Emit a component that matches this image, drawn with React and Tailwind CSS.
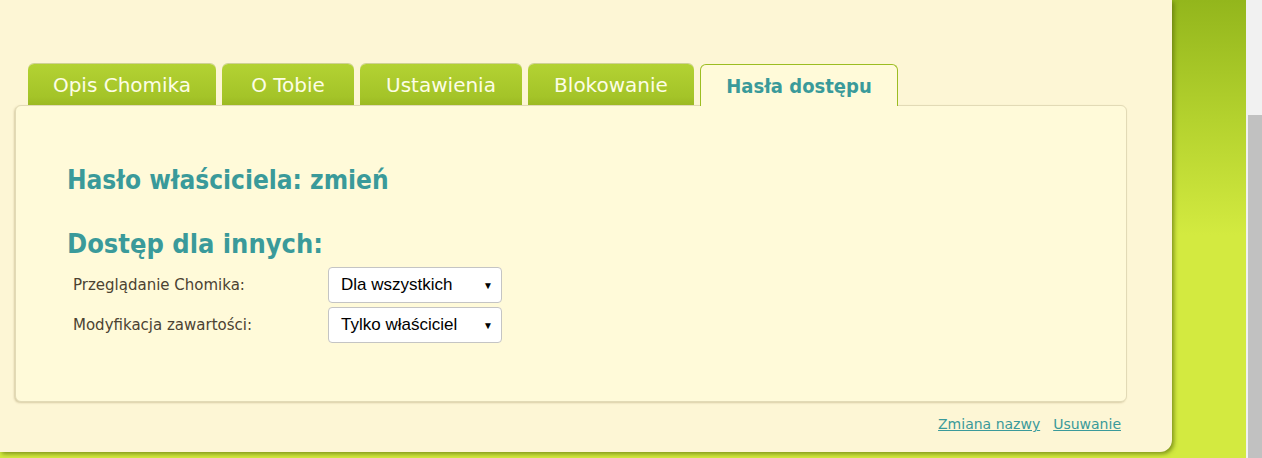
import { useState } from 'react';

const TABS = ['Opis Chomika', 'O Tobie', 'Ustawienia', 'Blokowanie', 'Hasła dostępu'];
const TAB_W = ['w-[188px]', 'w-[132px]', 'w-[162px]', 'w-[166px]', 'w-[198px]'];

function Select({ value }) {
  return (
    <div className="w-[174px] h-[36px] bg-white border border-[#c4c4c4] rounded-[4px] flex items-center justify-between pl-[12px] pr-[8px] font-['Liberation_Sans',Arial,sans-serif] text-[17px] text-black">
      <span>{value}</span>
      <span className="text-[10px]">▼</span>
    </div>
  );
}

export default function App() {
  const [active] = useState(4);
  return (
    <div className="flex h-[458px] w-[1262px] overflow-hidden font-['DejaVu_Sans',sans-serif]">
      {/* page + green side */}
      <div className="w-[1246px] h-full bg-[linear-gradient(to_bottom,#93b61c_0px,#b4d22e_120px,#d3ea40_235px,#d3ea40_100%)]">
        <div className="w-[1172px] h-[452px] bg-[#fdf6d5] rounded-br-[12px] shadow-[2px_2px_4px_rgba(90,110,10,0.7)] pl-[15px] pr-[45px] pt-[63px]">
          {/* tabs */}
          <div className="flex items-end pl-[13px] gap-[6px] h-[42px] relative z-10">
            {TABS.map((t, i) =>
              i === active ? (
                <div
                  key={t}
                  className={`${TAB_W[i]} h-[42px] -mb-px bg-[#fffad9] border border-b-0 border-[#9cbd22] rounded-t-[6px] flex items-center justify-center font-['DejaVu_Sans_Condensed','DejaVu_Sans',sans-serif] text-[20px] font-bold text-[#3a9a9a]`}
                >
                  {t}
                </div>
              ) : (
                <div
                  key={t}
                  className={`${TAB_W[i]} h-[41px] bg-[linear-gradient(to_bottom,#b3d233,#a4c428_80%,#9cb923)] rounded-t-[6px] flex items-center justify-center text-[20px] text-[#fdfde6] shadow-[0_-1px_0_rgba(120,140,30,0.35)]`}
                >
                  {t}
                </div>
              )
            )}
          </div>
          {/* content box */}
          <div className="h-[297px] bg-[#fffad9] rounded-[6px] border border-[#e2dab6] shadow-[-1px_1px_2px_rgba(150,130,80,0.35)] pl-[51px] pt-[56px] font-['DejaVu_Sans_Condensed','DejaVu_Sans',sans-serif]">
            <h2 className="text-[26px] font-bold text-[#3a9a9a] leading-[36px]">Hasło właściciela: zmień</h2>
            <h2 className="text-[27px] font-bold text-[#3a9a9a] leading-[36px] mt-[28px]">Dostęp dla innych:</h2>
            <div className="flex flex-col gap-[4px] mt-[5px] pl-[6px] font-['DejaVu_Sans',sans-serif]">
              <div className="flex items-center">
                <span className="w-[255px] text-[15px] text-[#4b4232]">Przeglądanie Chomika:</span>
                <Select value="Dla wszystkich" />
              </div>
              <div className="flex items-center">
                <span className="w-[255px] text-[15px] text-[#4b4232]">Modyfikacja zawartości:</span>
                <Select value="Tylko właściciel" />
              </div>
            </div>
          </div>
          <div className="flex justify-end gap-[13px] pr-[6px] mt-[12px] text-[14px] text-[#3a9a9a]">
            <a href="#" className="underline">Zmiana nazwy</a>
            <a href="#" className="underline">Usuwanie</a>
          </div>
        </div>
      </div>
      {/* scrollbar */}
      <div className="w-[16px] h-full bg-[#f1f1f1] flex flex-col pl-[2px]">
        <div className="h-[115px]" />
        <div className="flex-1 bg-[#c1c1c1]" />
      </div>
    </div>
  );
}
